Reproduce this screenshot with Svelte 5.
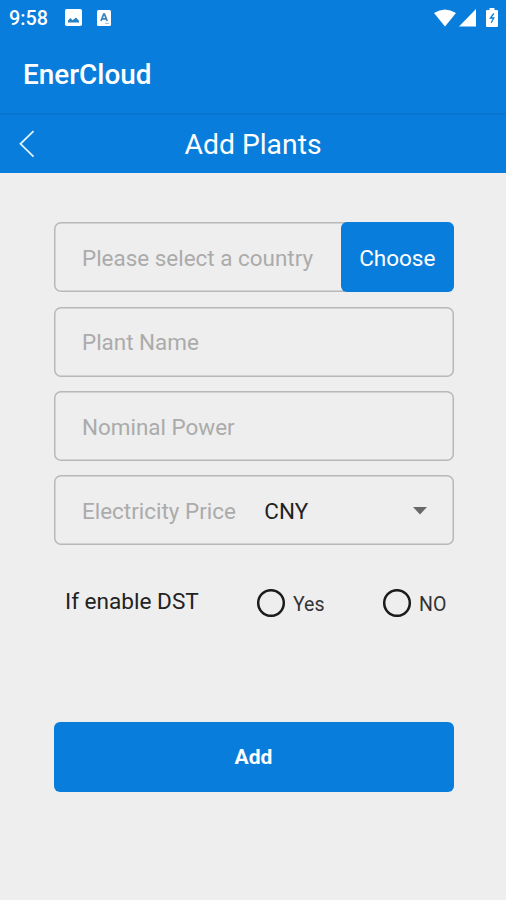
<script lang="ts">
	let dst = $state('');

	const options = [
		{ value: 'yes', label: 'Yes' },
		{ value: 'no', label: 'NO' }
	];
</script>

<div class="screen">
	<header>
		<div class="status">
			<span class="time">9:58</span>
			<svg class="photo" width="17" height="17" viewBox="0 0 17 17">
				<rect width="17" height="17" rx="1.8" fill="#fff" />
				<path d="M3 13.5v-2L5.4 9l2.2 2.3L11 8.5l3 3.2v1.8z" fill="#2a82c4" />
			</svg>
			<svg class="letter" width="14" height="16" viewBox="0 0 14 16">
				<rect width="14" height="16" rx="1.5" fill="#fff" />
				<path d="M4 11 6.7 4.2h.8L10.2 11M5 8.8h4.3" fill="none" stroke="#3b82ba" stroke-width="1.7" />
				<path d="M8 13.3h4" stroke="#8ebce5" />
			</svg>
			<div class="signals">
				<svg width="22" height="18" viewBox="0 0 22 18">
					<path d="M0 4Q11-3.2 22 4L11 17.5z" fill="#fff" />
				</svg>
				<svg width="17" height="18" viewBox="0 0 17 18">
					<path d="M17 0v17.5H0z" fill="#fff" />
				</svg>
				<svg class="battery" width="12" height="19" viewBox="0 0 12 19">
					<path d="M3.5 0h5v2H11q1 0 1 1v15q0 1-1 1H1q-1 0-1-1V3q0-1 1-1h2.5z" fill="#fff" />
					<path d="M7.8 5.5 4.4 10h3.4l-2.6 4.7" fill="none" stroke="#087ddc" stroke-width="1.3" />
				</svg>
			</div>
		</div>
		<h1>EnerCloud</h1>
	</header>

	<nav>
		<button class="back" aria-label="Back">
			<svg width="16" height="28" viewBox="0 0 16 28">
				<path d="M14.5 1.2 1.5 13.8l13 12.8" fill="none" stroke="#e4f4ff" stroke-width="1.8" />
			</svg>
		</button>
		<h2>Add Plants</h2>
	</nav>

	<main>
		<div class="field">
			<span class="placeholder">Please select a country</span>
			<button class="choose">Choose</button>
		</div>
		<div class="field"><span class="placeholder">Plant Name</span></div>
		<div class="field"><span class="placeholder">Nominal Power</span></div>
		<div class="field">
			<span class="placeholder">Electricity Price</span>
			<span class="currency">CNY</span>
			<svg class="caret" width="14" height="8" viewBox="0 0 14 8">
				<path d="M0 0h14L7 7.5z" fill="#686868" />
			</svg>
		</div>

		<div class="dst">
			<span class="question">If enable DST</span>
			{#each options as option}
				<button class="option" onclick={() => (dst = option.value)}>
					<svg width="28" height="28" viewBox="0 0 28 28">
						<circle cx="14" cy="14" r="12.8" fill="none" stroke="#1c1c1c" stroke-width="2.5" />
						{#if dst === option.value}
							<circle cx="14" cy="14" r="7" fill="#1c1c1c" />
						{/if}
					</svg>
					<span class="label">{option.label}</span>
				</button>
			{/each}
		</div>

		<button class="add">Add</button>
	</main>
</div>

<style>
	:global(body) {
		background: #eee;
	}

	.screen {
		box-sizing: border-box;
		width: 506px;
		height: 900px;
		overflow: hidden;
		background: #eee;
		font-family: Roboto, 'Liberation Sans', sans-serif;
	}

	button {
		padding: 0;
		border: 0;
		background: none;
		font-family: inherit;
	}

	svg {
		display: block;
		flex-shrink: 0;
	}

	header {
		box-sizing: border-box;
		height: 115px;
		background: #087ddc;
		border-bottom: 2px solid #0876d1;
		color: #fff;
	}

	.status {
		display: flex;
		align-items: center;
		height: 36px;
		padding: 0 8px 0 9px;
	}

	.time {
		width: 56px;
		font-size: 19.8px;
		font-weight: 500;
	}

	.photo {
		margin-top: -1px;
	}

	.letter {
		margin: -1px 0 0 15px;
	}

	.signals {
		display: flex;
		align-items: center;
		gap: 3px;
		margin: -1px 0 0 auto;
	}

	.battery {
		margin-left: 7px;
	}

	h1 {
		margin: 0;
		padding-left: 23px;
		font-size: 27.9px;
		font-weight: 500;
		line-height: 78px;
	}

	nav {
		box-sizing: border-box;
		display: grid;
		grid-template-columns: 54px 1fr 54px;
		align-items: center;
		height: 58px;
		background: #087ddc;
		color: #fff;
	}

	.back {
		padding-left: 19px;
	}

	h2 {
		margin: 0;
		padding-top: 1px;
		font-size: 28.3px;
		font-weight: 400;
		line-height: 57px;
		text-align: center;
	}

	main {
		display: flex;
		flex-direction: column;
		gap: 14.4px;
		padding: 49.3px 52.5px 0 53.5px;
	}

	.field {
		box-sizing: border-box;
		display: flex;
		align-items: center;
		height: 70px;
		padding: 1px 0 0 28.5px;
		border-radius: 7px;
		box-shadow: inset 0 0 0 1.5px #b8b8b8;
		font-size: 22.45px;
	}

	.placeholder {
		color: #ababab;
		white-space: nowrap;
	}

	.choose {
		width: 112.5px;
		height: 70px;
		margin: -1px 0 0 auto;
		padding-top: 1px;
		border-radius: 6px;
		background: #087ddc;
		color: #fff;
		font-size: 22.5px;
	}

	.currency {
		margin-left: 28.5px;
		color: #222;
	}

	.caret {
		margin: 0 27px 0 auto;
	}

	.dst {
		display: grid;
		grid-template-columns: 192px 126px 1fr;
		align-items: center;
		height: 40px;
		margin-top: 23.5px;
		padding-left: 11.5px;
		color: #222;
	}

	.question {
		padding-bottom: 3px;
		font-size: 22.6px;
	}

	.option {
		display: flex;
		align-items: center;
		gap: 8px;
		color: #333;
	}

	.label {
		padding-top: 3px;
		font-size: 19.5px;
	}

	.add {
		height: 70px;
		margin-top: 84px;
		padding-top: 1px;
		border-radius: 6px;
		background: #087ddc;
		color: #fff;
		font-size: 21px;
		font-weight: 700;
	}
</style>
